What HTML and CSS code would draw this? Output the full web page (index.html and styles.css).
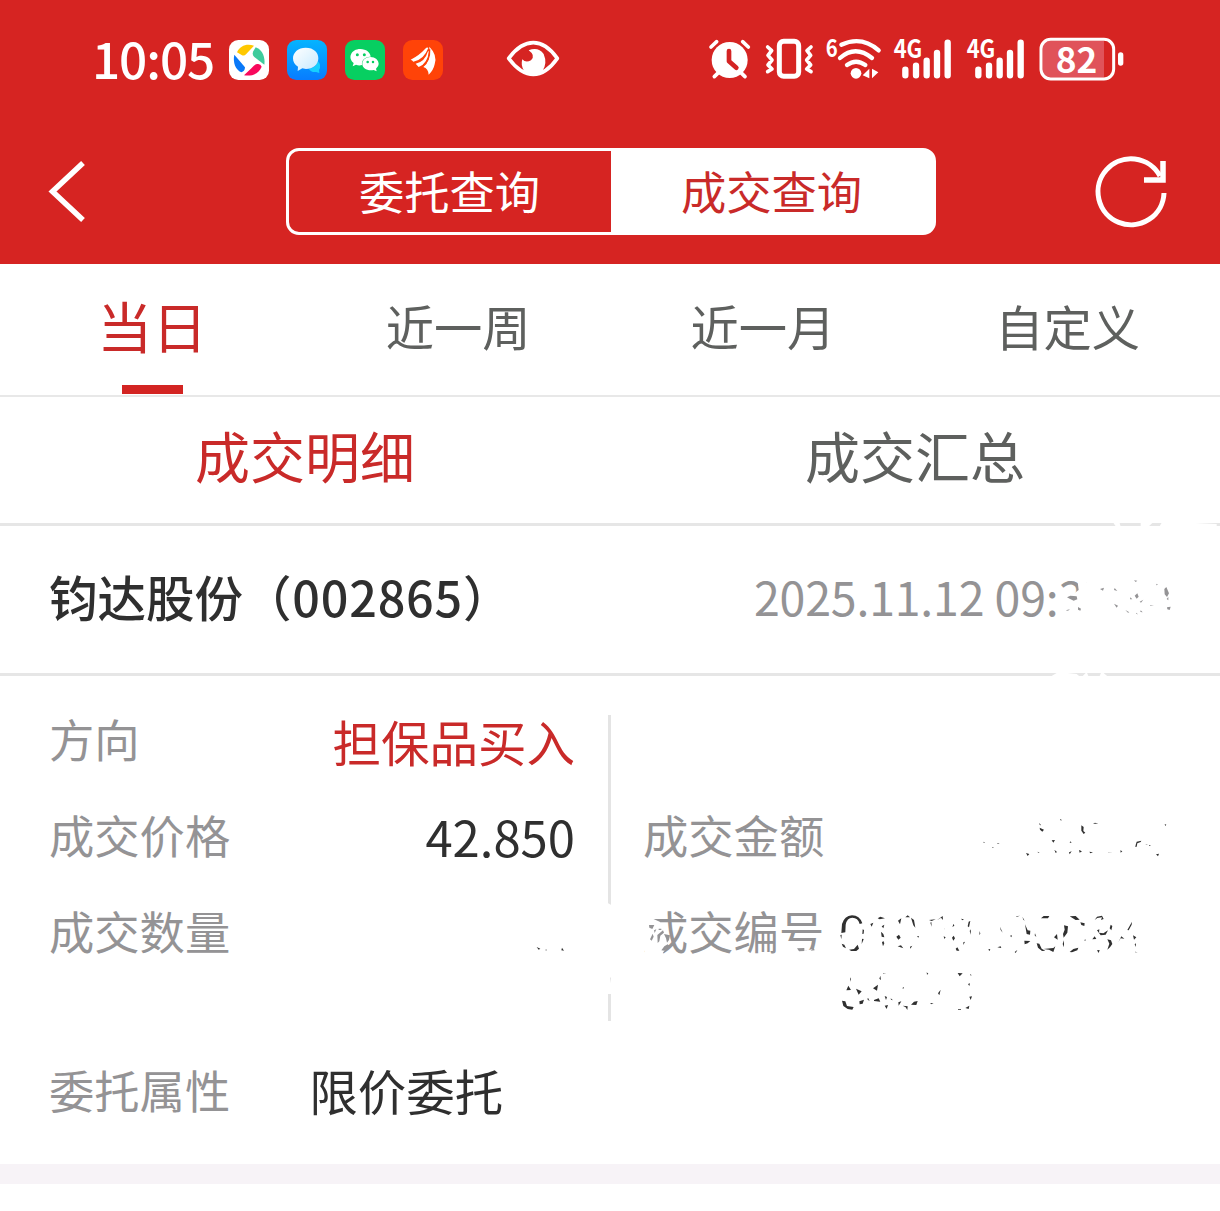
FILE: index.html
```html
<!DOCTYPE html>
<html lang="zh-CN">
<head>
<meta charset="utf-8">
<title>成交查询</title>
<link rel="stylesheet" href="styles.css">
</head>
<body>
<header class="top">
  <div class="status">
    <span class="clock">10:05</span>
    <div class="apps">
      <svg width="40" height="40" viewBox="0 0 120 120"><rect width="120" height="120" rx="28" fill="#fff"/><path d="M24 37C33 17 53 10 75 17L51 43Q45 49 38 45Z" fill="#ffc800"/><path d="M80 22C100 30 109 50 106 74L76 51Q68 44 73 34Z" fill="#3ecb9c"/><path d="M16 44C11 67 19 89 37 97Q48 94 48 82Z" fill="#0878f8"/><path d="M45 106C70 110 90 100 98 80Q95 70 84 72Q76 74 68 84Z" fill="#f8085c"/></svg>
      <svg width="40" height="40" viewBox="0 0 120 120"><defs><linearGradient id="sky" x2="0" y2="1"><stop stop-color="#05b4ff"/><stop offset="1" stop-color="#087cff"/></linearGradient><linearGradient id="cloud" x2="1" y2="1"><stop stop-color="#fff"/><stop offset="1" stop-color="#c6e9ff"/></linearGradient></defs><rect width="120" height="120" rx="28" fill="url(#sky)"/><path d="M65 86Q88 84 92 62Q105 76 96 90L97 99L87 96Q73 98 65 86Z" fill="#16cfff"/><path d="M56 23C81 23 94 38 94 55C94 74 78 87 57 87L46 85L32 93L33 80C23 74 18 65 18 55C18 37 34 23 56 23Z" fill="url(#cloud)"/></svg>
      <svg width="40" height="40" viewBox="0 0 120 120"><rect width="120" height="120" rx="28" fill="#07cf61"/><path d="M46 27C64 27 76 38 77 50C61 49 49 60 51 75Q42 78 33 74L23 79L26 69C7 54 18 27 46 27Z" fill="#fff"/><path d="M76 51C91 51 101 61 101 72Q101 80 93 86L95 94L86 90C67 94 52 84 52 72C52 60 62 51 76 51Z" fill="#fff"/><g fill="#07cf61"><circle cx="37" cy="44" r="4.5"/><circle cx="58" cy="44" r="4.5"/><circle cx="68" cy="66" r="3.8"/><circle cx="84" cy="66" r="3.8"/></g></svg>
      <svg width="40" height="40" viewBox="0 0 120 120"><rect width="120" height="120" rx="28" fill="#ff4308"/><g fill="#fff"><path d="M23 59Q48 47 66 27Q73 20 76 24Q62 60 31 65Q28 60 23 59Z"/><path d="M74 36Q66 65 38 71L47 81Q74 71 78 32Z"/><path d="M79 20Q104 45 95 73Q91 92 77 104Q76 86 61 81Q84 63 79 20Z"/></g><path d="M55 81Q82 66 80 28" fill="none" stroke="#ff4308" stroke-width="4"/></svg>
    </div>
    <svg class="eye" width="54" height="40" viewBox="48 43 162 120"><path d="M56 101Q91 54 130 54Q168 54 202 101Q168 149 130 149Q91 149 56 101Z" fill="none" stroke="#fff" stroke-width="11" stroke-linejoin="round"/><path d="M116 77Q145 66 161 88Q173 116 157 140Q130 158 103 140Q91 123 97 104Q107 116 123 107Q138 93 116 77Z" fill="#fff"/></svg>
    <div class="signals">
      <svg width="45" height="50" viewBox="21 30 135 150"><circle cx="89" cy="105" r="54" fill="#fff"/><g stroke="#fff" stroke-width="11" stroke-linecap="round"><path d="M33 66L50 50M145 66L128 50M43 155L56 142M135 155L122 142"/></g><path d="M87 78V109L109 128" fill="none" stroke="#d42323" stroke-width="14" stroke-linecap="round" stroke-linejoin="round"/></svg>
      <svg width="50" height="50" viewBox="195 30 150 150"><rect x="238" y="49" width="58" height="105" rx="13" fill="none" stroke="#fff" stroke-width="15"/><path d="M203 66L215 77L204 91L216 105L204 120L216 132L203 140M333 66L321 77L332 91L320 105L332 120L320 132L333 140" fill="none" stroke="#fff" stroke-width="11" stroke-linejoin="round" stroke-linecap="round"/></svg>
      <svg width="57" height="50" viewBox="375 30 171 150"><text class="tiny" x="377" y="96" font-size="74" textLength="36" lengthAdjust="spacingAndGlyphs">6</text><g fill="none" stroke="#fff" stroke-width="13" stroke-linecap="round"><path d="M424 59Q485 31 536 76M420 99Q466 58 516 99M441 120Q468 100 496 120"/></g><circle cx="468" cy="145" r="16" fill="#fff"/><path d="M508 131V160L488 151ZM516 131L535 142L516 160Z" fill="#fff"/></svg>
      <svg class="cell" width="59" height="50" viewBox="579 30 177 150"><text class="tiny" x="581" y="100" font-size="76" textLength="86" lengthAdjust="spacingAndGlyphs">4G</text><path class="bars" d="M616 134V151M648 122V151M680 107V151M711 84V151M743 53V151"/></svg>
      <svg class="cell second" width="59" height="50" viewBox="579 30 177 150"><text class="tiny" x="581" y="100" font-size="76" textLength="86" lengthAdjust="spacingAndGlyphs">4G</text><path class="bars" d="M616 134V151M648 122V151M680 107V151M711 84V151M743 53V151"/></svg>
      <svg class="battery" width="87" height="50" viewBox="264 30 261 150"><path d="M298 47H462V158H298Q278 158 278 136V69Q278 47 298 47Z" fill="#e0535a"/><rect x="273" y="43" width="218" height="119" rx="29" fill="none" stroke="#fff" stroke-width="9"/><rect x="504" y="82" width="16" height="40" rx="8" fill="#fff"/><text class="level" x="317" y="143" font-size="106" textLength="125" lengthAdjust="spacingAndGlyphs">82</text></svg>
    </div>
  </div>
  <nav class="bar">
    <svg class="back" width="44" height="68" viewBox="0 0 44 68"><path d="M40 5L9.5 33.5L40 62" fill="none" stroke="#fff" stroke-width="5.5"/></svg>
    <div class="segment"><span>委托查询</span><span class="on">成交查询</span></div>
    <svg class="refresh" width="80" height="80" viewBox="0 0 80 80"><path d="M73 41A33 33 0 1 1 69 24" fill="none" stroke="#fff" stroke-width="5"/><path d="M72 9V28H53" fill="none" stroke="#fff" stroke-width="5.5"/></svg>
  </nav>
</header>
<nav class="ranges"><span class="on">当日</span><span>近一周</span><span>近一月</span><span>自定义</span></nav>
<nav class="views"><span class="on">成交明细</span><span>成交汇总</span></nav>
<section class="stock">
  <h1>钧达股份<span class="code">（002865）</span></h1>
  <time>2025.11.12 09:3</time>
  <svg class="smudge-time" width="190" height="180" viewBox="870 0 570 540"><path d="M1118 35H1138L1142 50H1128ZM1202 38H1238L1225 50H1202ZM1265 38H1350L1430 42V50H1258ZM935 498L955 486L1010 492L1020 500ZM1040 486L1026 500H1046ZM1085 484L1104 500H1078Z" fill="#fff"/><path d="M955 243L976 240L981 248L1003 250L1016 240L1012 208L1045 205V325H957L946 281Z" fill="#fff"/><path class="grey" d="M981 262L991 257L1010 259L1012 268L1001 272L989 266ZM1014 291L1023 296L1021 302L1014 299ZM1037 221L1044 214L1041 217ZM1080 237L1092 233L1089 242ZM1122 281L1134 287L1130 293ZM1124 234L1132 243L1122 240ZM1182 211L1192 212L1187 216ZM1184 257L1192 250L1196 260L1190 266ZM1199 275L1210 269L1203 278ZM1171 262L1177 268H1170ZM1273 237L1279 231L1287 250L1281 261L1274 253ZM1280 267L1285 261V271ZM1281 292L1292 290L1289 300L1282 298ZM1156 300L1168 307L1164 308ZM1188 308L1194 313L1189 312ZM1202 301L1208 307L1201 306ZM1230 285L1242 287H1231ZM1249 221L1254 224L1249 226ZM977 301L990 298L984 302Z"/></svg>
</section>
<section class="details">
  <div class="columns">
    <dl class="left">
      <div><dt>方向</dt><dd class="buy">担保品买入</dd></div>
      <div><dt>成交价格</dt><dd class="price">42.850</dd></div>
      <div><dt>成交数量</dt><dd><svg class="qty" width="40" height="12" viewBox="108 170 120 36"><path class="ink" d="M110 176L121 181L116 184ZM186 178L192 187L184 186ZM136 184H141V186H136Z"/></svg></dd></div>
    </dl>
    <i class="divider"></i>
    <dl class="right">
      <div><dt>成交金额</dt><dd><svg class="amount" width="190" height="44" viewBox="480 50 570 132"><path class="ink" d="M655 70L660 78L656 77ZM656 85L669 91L664 97L657 91ZM717 59L724 63H718ZM781 78L788 83L787 95L793 100L788 104L781 94ZM816 73L822 70L832 73ZM692 123L702 122L697 130ZM774 152L783 156L776 160ZM744 159L752 156L746 165ZM700 151L708 158L704 161ZM615 161L625 164L620 170ZM805 157L816 159L808 162ZM898 153L904 156L899 160ZM944 137L947 127L961 124L959 128L949 132L947 142L943 143ZM973 134L981 137L976 136ZM1005 165L1014 163L1011 171ZM1031 74L1036 76L1033 80ZM487 127L493 130H488ZM529 131L536 134H530ZM513 143L520 145H514ZM650 157L656 160H651ZM860 160L876 161H862ZM985 137L990 140H984ZM748 126L752 130H746Z"/></svg></dd></div>
      <div><dt class="worn">成交编号<svg class="scrape" width="190" height="50" viewBox="430 50 570 150"><path d="M436 50H458L455 83L480 94L491 114L500 108L508 140L514 152L492 184L480 200H434ZM884 170L893 176L912 174L918 180L944 176L950 200H870Z" fill="#fff"/><path class="grey" d="M448 104H464L458 116L449 112ZM451 147L459 130L462 139L456 151ZM463 120L470 117L465 128ZM477 115H485V119H477ZM473 134L490 120L493 127L482 136L479 153L474 158ZM493 131L511 135L508 149L502 157L499 144ZM494 168L504 162L511 168L494 181L485 180ZM892 174L914 173V182L898 183ZM942 173L933 181L945 180Z"/></svg></dt><dd><svg class="number" width="310" height="103" viewBox="60 330 930 309"><path class="ink" d="M64 399L66 372Q73 348 96 346Q119 346 127 370L119 372Q114 353 97 353Q81 353 77 374L76 397ZM61 405L65 404L64 418ZM65 431L73 434L78 445L69 440ZM87 449L102 447L113 434L117 446L109 453L94 453ZM128 388L132 390L131 401L127 402ZM129 416L131 418L125 432L126 417ZM151 372L160 368L155 380ZM173 355L181 350L195 355L179 358ZM185 379L193 374L190 385ZM183 395L190 402L193 412L185 410ZM190 423L193 430L189 439L186 427ZM234 362L244 355L240 373ZM256 352L263 346L270 352ZM273 353L282 360L286 383L280 376ZM229 410L237 404L242 413L235 419ZM233 439L243 436L250 445ZM270 440L277 437L271 446ZM291 409L297 408L295 413ZM327 360L347 358L335 363ZM351 361L368 348L369 360L363 353ZM334 366L335 380L331 368ZM371 409L377 412L373 417ZM372 384L376 390L373 386ZM396 413L401 407L405 415L400 422ZM397 381L401 371L403 377ZM423 356L432 358L427 361ZM446 365L451 363L447 382L443 379ZM452 388L453 404L449 393ZM430 427L435 425L430 435ZM407 446L412 442L418 452H410ZM478 405L479 393L481 401ZM505 448L511 447L508 454ZM532 442L542 439L544 444ZM540 380L548 398L542 390ZM570 407L576 406L574 412ZM587 349L600 347L591 350ZM607 350L614 362L610 359ZM615 373L623 391L631 392L630 404L620 402ZM613 422L631 423L623 430L614 433ZM584 456L592 450L587 459ZM645 400L649 411L644 406ZM650 430L658 431L665 446L676 452L666 453L654 443ZM663 355L671 348L688 348L684 355ZM670 447L700 444L706 439L700 456L687 449ZM702 412L711 402L713 419ZM729 402L734 389L732 376L744 379L742 398L731 413ZM749 349L767 348L779 359L767 360ZM781 367L794 370L793 378L784 375ZM732 421L732 442L728 432ZM749 456L760 447L775 443L772 451L756 457ZM795 418L798 421L793 422ZM817 418L824 409L829 417ZM824 360L831 350L846 347L851 357L843 360L846 352L832 354ZM872 374L877 378L874 391L869 385ZM831 391L838 388L837 398L850 400L864 391L857 404L842 406ZM862 418L873 421L877 432L870 442L862 449L868 431ZM831 451L839 450L836 459ZM895 427L904 409L913 416L902 415ZM922 390L936 365L935 374L926 391ZM939 406L949 412L942 419ZM944 433L948 430L947 441ZM946 455L953 457H945ZM79 571L85 557L93 570ZM108 566L125 574L116 584ZM118 604L132 599L128 611L119 613ZM66 602L76 604L81 618L101 621L97 629L83 627L70 618ZM189 520L199 521H189ZM181 527L183 540L178 536ZM159 565L174 554L171 572ZM144 593L149 604L142 598ZM162 600L176 595L181 605L162 603ZM194 617L204 615L200 627ZM194 588L201 591L198 600ZM212 595L219 601L213 599ZM235 607L244 604L236 617ZM248 617L263 619L262 630L257 622ZM282 605L293 603L289 615L273 614ZM354 580L362 569L358 586ZM331 609L341 610L333 613ZM413 519L428 520L419 529ZM444 552L450 550L448 558ZM448 590L456 589L452 600ZM436 624L448 617L446 627ZM249 560L252 564L248 567ZM320 517L325 521L321 524ZM450 523L456 526H450ZM90 532L93 537L91 545ZM414 627H423V629H414Z"/></svg></dd></div>
    </dl>
    <svg class="rub" width="12" height="92" viewBox="0 0 12 92"><path d="M2 0L9 4V73L6 76L9 92H2Z" fill="#fff"/></svg>
  </div>
  <div class="attribute"><span>委托属性</span><b>限价委托</b></div>
</section>
<div class="strip"></div>
</body>
</html>
```
FILE: styles.css
```css
* { box-sizing: border-box; }
body {
  margin: 0;
  width: 1220px;
  height: 1211px;
  overflow: hidden;
  background: #fff;
  color: #2f2f2f;
  font-family: "Noto Sans CJK SC", sans-serif;
  font-size: 48.5px;
  line-height: 1;
}
svg { display: block; flex: none; overflow: visible; }
dl, dd, h1 { margin: 0; font-weight: 400; }

.top { height: 264px; background: #d62422; color: #fff; }
.status { display: flex; height: 120px; padding: 0 95px 0 92px; align-items: center; }
.clock { width: 137px; padding-bottom: 4px; font-size: 49.5px; font-weight: 500; letter-spacing: -1.1px; white-space: nowrap; }
.apps { display: flex; gap: 18px; }
.eye { margin: 0 0 2px 63px; }
.signals { display: flex; margin-left: 147px; }
.signals svg + svg { margin-left: 13px; }
.signals svg:nth-child(3) { margin-left: 10px; }
.signals .cell { margin-left: 11px; }
.signals .second { margin-left: 14px; }
.signals .battery { margin-left: 13px; }
.tiny, .level { fill: #fff; font-family: "Noto Sans CJK SC", sans-serif; font-weight: 700; }
.bars { fill: none; stroke: #fff; stroke-width: 19; stroke-linecap: round; }

.bar { display: flex; align-items: center; height: 144px; padding: 0 49px 0 43px; justify-content: space-between; }
.segment { display: flex; width: 650px; height: 87px; margin: 0 0 1px 43px; border: 3px solid #fff; border-radius: 13px; background: linear-gradient(90deg, transparent 60%, #fff 60%); font-size: 45.3px; }
.segment span { display: flex; flex: 1; align-items: center; justify-content: center; padding-bottom: 2px; }
.segment .on { background: #fff; color: #c92a29; border-radius: 0 9px 9px 0; }
.refresh { margin-bottom: 1px; }

.ranges { display: flex; height: 133px; border-bottom: 2px solid #e8e8e8; }
.ranges span { position: relative; display: flex; flex: 1; align-items: center; justify-content: center; color: #5e605e; font-size: 48.3px; padding-bottom: 9px; }
.ranges .on { color: #c92a29; font-size: 55px; padding-bottom: 10px; padding-right: 1px; }
.ranges .on::after { content: ""; position: absolute; left: 122px; bottom: 1px; width: 61px; height: 9px; background: #d32422; }

.views { display: flex; height: 129px; border-bottom: 3px solid #e6e6e6; font-size: 55px; }
.views span { display: flex; flex: 1; align-items: center; justify-content: center; padding-bottom: 11px; color: #5e605e; }
.views .on { color: #c92a29; }

.stock { position: relative; display: flex; align-items: center; justify-content: space-between; height: 150px; padding: 0 155px 6px 49px; border-bottom: 3px solid #e6e6e6; }
.stock h1 { font-size: 48.5px; font-weight: 500; white-space: nowrap; }
.code { letter-spacing: .8px; }
.stock time { width: 311px; color: #949395; font-size: 46.5px; letter-spacing: -.2px; white-space: nowrap; }
.smudge-time { position: absolute; left: 1030px; top: -16px; }
.grey { fill: #949395; }
.ink { fill: #303030; }

.details { height: 488px; padding: 16px 49px 0; }
.columns { position: relative; display: flex; height: 351px; }
.left { width: 526px; }
.left > div, .right > div { display: flex; height: 96px; align-items: center; justify-content: space-between; padding-bottom: 2px; }
dt, .attribute span { color: #949395; font-size: 45.3px; white-space: nowrap; }
.buy { color: #c92a29; padding-top: 5px; }
.price { font-size: 49px; }
.qty { margin: 40px -1px 0 0; }
.divider { width: 3px; height: 306px; margin: 23px 32px 0 33px; background: #e4e4e4; }
.right { width: 527px; padding-top: 96px; }
.amount { margin-right: -1px; margin-top: 5px; }
.right > div:last-child { justify-content: flex-start; }
.worn { position: relative; width: 197px; }
.scrape { position: absolute; left: 0; top: -1px; }
.number { margin-top: 61px; }
.rub { position: absolute; left: 555px; top: 210px; }
.attribute { display: flex; align-items: center; height: 96px; padding-bottom: 2px; }
.attribute b { margin-left: 79px; font-weight: 400; font-size: 48.5px; }
.strip { height: 20px; background: #f7f3f7; }
```
